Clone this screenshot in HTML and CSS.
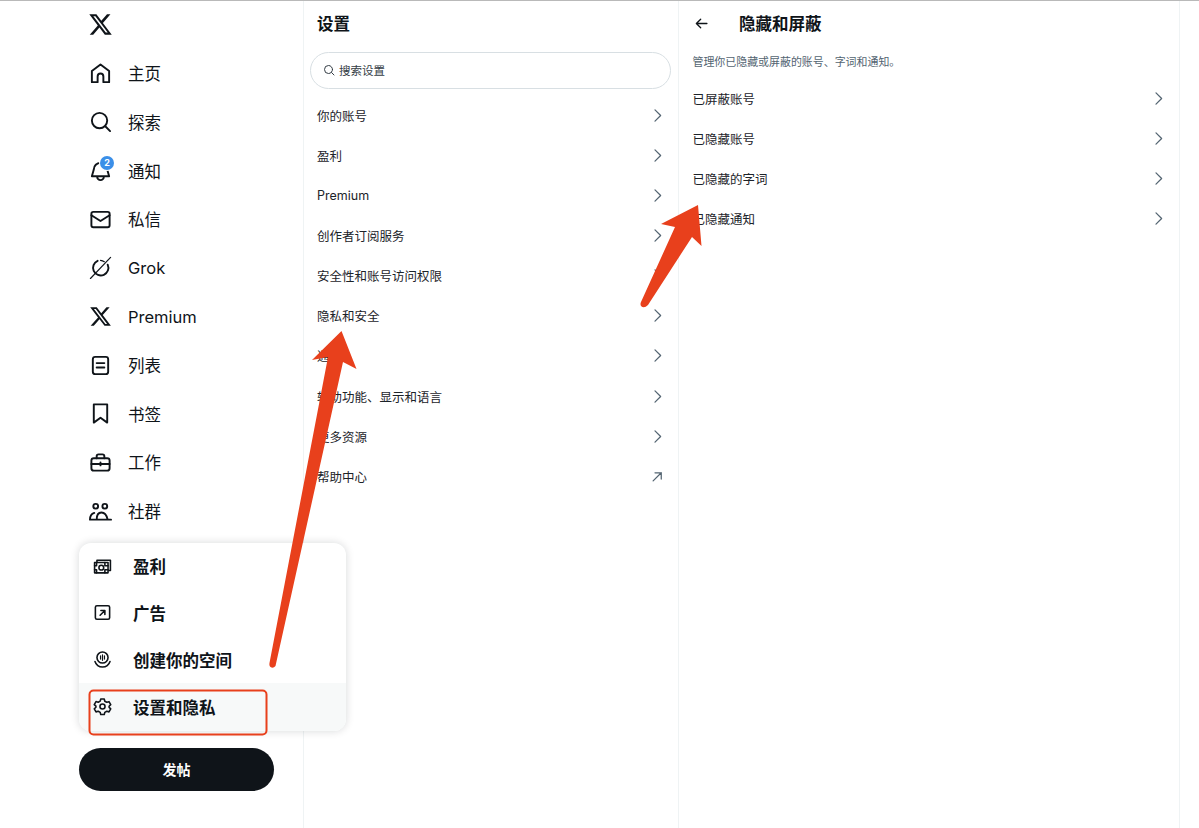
FILE: index.html
```html
<!DOCTYPE html>
<html lang="zh-CN">
  <head>
    <meta charset="UTF-8" />
    <meta name="viewport" content="width=device-width, initial-scale=1.0" />
    <title>隐藏和屏蔽</title>
    <link rel="stylesheet" href="styles.css">
  </head>
  <body>
    <div class="app">
      <aside class="sidebar">
        <div class="logo">
          <svg viewBox="0 0 24 24" class="icon-logo"><path class="fill" d="M18.244 2.25h3.308l-7.227 8.26 8.502 11.24H16.17l-5.214-6.817L4.99 21.75H1.68l7.73-8.835L1.254 2.25H8.08l4.713 6.231zm-1.161 17.52h1.833L7.084 4.126H5.117z"/></svg>
        </div>
        <nav class="nav">
          <a class="nav-item">
            <svg viewBox="0 0 24 24" class="icon"><path d="M12 2.6 21 9.4V21h-6v-6a3 3 0 0 0-6 0v6H3V9.4z"/></svg>
            <span>主页</span>
          </a>
          <a class="nav-item">
            <svg viewBox="0 0 24 24" class="icon"><circle cx="11" cy="11" r="8"/><path d="m17 17 5 5"/></svg>
            <span>探索</span>
          </a>
          <a class="nav-item">
            <span class="icon-wrap">
              <svg viewBox="0 0 24 24" class="icon"><path d="M5 11a7 7 0 0 1 7-7c4 0 7 3 7 7l2 7H3zM8.5 18.5a3.5 3.5 0 0 0 7 0"/></svg>
              <span class="badge">2</span>
            </span>
            <span>通知</span>
          </a>
          <a class="nav-item">
            <svg viewBox="0 0 24 24" class="icon"><rect x="2.5" y="4" width="19" height="16" rx="2"/><path d="m2.5 7.5 9.5 6 9.5-6"/></svg>
            <span>私信</span>
          </a>
          <a class="nav-item">
            <svg viewBox="0 0 24 24" class="icon"><path d="M19.5 9A8 8 0 1 1 9 5"/><path d="M1.5 23.5 22.5 1.5" class="thin"/><path d="M12 4.500a8 8 0 0 1 4 1.500" class="thin"/></svg>
            <span>Grok</span>
          </a>
          <a class="nav-item">
            <svg viewBox="0 0 24 24" class="icon"><path class="fill" d="M18.244 2.25h3.308l-7.227 8.26 8.502 11.24H16.17l-5.214-6.817L4.99 21.75H1.68l7.73-8.835L1.254 2.25H8.08l4.713 6.231zm-1.161 17.52h1.833L7.084 4.126H5.117z"/></svg>
            <span>Premium</span>
          </a>
          <a class="nav-item">
            <svg viewBox="0 0 24 24" class="icon"><rect x="4" y="3" width="16" height="18" rx="2.5"/><path d="M8 9.5h8M8 14h8"/></svg>
            <span>列表</span>
          </a>
          <a class="nav-item">
            <svg viewBox="0 0 24 24" class="icon"><path d="M5 2.5h14v19l-7-5-7 5z"/></svg>
            <span>书签</span>
          </a>
          <a class="nav-item">
            <svg viewBox="0 0 24 24" class="icon"><rect x="2.5" y="7.5" width="19" height="13" rx="2.5"/><path d="M8 7.5V5.5a2 2 0 0 1 2-2h4a2 2 0 0 1 2 2v2M2.5 13.5h19M12 12v3"/></svg>
            <span>工作</span>
          </a>
          <a class="nav-item">
            <svg viewBox="0 0 24 24" class="icon"><circle cx="7" cy="6.5" r="2.5"/><circle cx="16.5" cy="6.5" r="2.5"/><path d="M6.5 20.500H1c0-3.500 1.500-6 4.500-7M8 20.500c0-4.500 1.800-7.500 5-7.500 3.500 0 5.500 3 6.500 7.500M8 20.500h15"/></svg>
            <span>社群</span>
          </a>
        </nav>

        <div class="popup">
          <a class="popup-item popup-item-first">
            <svg viewBox="0 0 24 24" class="icon-sm"><path d="M5 6V4h17v13h-2"/><rect x="2" y="7" width="17" height="13"/><circle cx="10.5" cy="13.5" r="3"/><path d="M2 11h2.500V7M15 7v4h4M2 16h2.500v4M19 16h-4v4"/></svg>
            <span>盈利</span>
          </a>
          <a class="popup-item">
            <svg viewBox="0 0 24 24" class="icon-sm"><rect x="3" y="3.5" width="18" height="17" rx="2"/><path d="M9 15.5 15 9.5M10 9.5h5v5"/></svg>
            <span>广告</span>
          </a>
          <a class="popup-item">
            <svg viewBox="0 0 24 24" class="icon-sm"><circle cx="12" cy="9.500" r="7"/><path class="thin" d="M9.500 7.500v4M12 6v7M14.500 7.500v4"/><path d="M2.500 14.500c1.500 4.500 5 7 9.500 7s8-2.500 9.500-7"/></svg>
            <span>创建你的空间</span>
          </a>
          <a class="popup-item popup-item-active">
            <svg viewBox="0 0 24 24" class="icon-sm"><circle cx="12" cy="12" r="3.2"/><path d="M9.8 2.500h4.400l.7 2.800 2.500 1.400 2.800-.8 2.200 3.800-2.100 2 .1 1.400 2 1.900-2.200 3.800-2.800-.8-2.500 1.400-.7 2.800H9.800l-.7-2.800-2.500-1.400-2.800.8-2.200-3.800 2.100-2V11.600l-2.100-2 2.200-3.800 2.800.8 2.500-1.400z"/></svg>
            <span>设置和隐私</span>
          </a>
        </div>

        <button class="post-btn">发帖</button>
      </aside>

      <section class="settings">
        <h2 class="settings-title">设置</h2>
        <div class="search">
          <svg viewBox="0 0 24 24" class="icon-search"><circle cx="11" cy="11" r="8"/><path d="m17 17 5 5"/></svg>
          <span>搜索设置</span>
        </div>
        <ul class="rows">
          <li class="row">你的账号<svg viewBox="0 0 24 24" class="chevron"><path d="m8 3 9 9-9 9"/></svg></li>
          <li class="row">盈利<svg viewBox="0 0 24 24" class="chevron"><path d="m8 3 9 9-9 9"/></svg></li>
          <li class="row">Premium<svg viewBox="0 0 24 24" class="chevron"><path d="m8 3 9 9-9 9"/></svg></li>
          <li class="row">创作者订阅服务<svg viewBox="0 0 24 24" class="chevron"><path d="m8 3 9 9-9 9"/></svg></li>
          <li class="row">安全性和账号访问权限<svg viewBox="0 0 24 24" class="chevron"><path d="m8 3 9 9-9 9"/></svg></li>
          <li class="row">隐私和安全<svg viewBox="0 0 24 24" class="chevron"><path d="m8 3 9 9-9 9"/></svg></li>
          <li class="row">通知<svg viewBox="0 0 24 24" class="chevron"><path d="m8 3 9 9-9 9"/></svg></li>
          <li class="row">辅助功能、显示和语言<svg viewBox="0 0 24 24" class="chevron"><path d="m8 3 9 9-9 9"/></svg></li>
          <li class="row">更多资源<svg viewBox="0 0 24 24" class="chevron"><path d="m8 3 9 9-9 9"/></svg></li>
          <li class="row">帮助中心<svg viewBox="0 0 24 24" class="chevron"><path d="M5 19 18 6M8 6h10v10"/></svg></li>
        </ul>
      </section>

      <section class="detail">
        <div class="detail-head">
          <svg viewBox="0 0 24 24" class="back"><path d="M22 12H3M10.500 4 2.500 12l8 8"/></svg>
          <h2 class="detail-title">隐藏和屏蔽</h2>
        </div>
        <p class="detail-desc">管理你已隐藏或屏蔽的账号、字词和通知。</p>
        <ul class="rows">
          <li class="row">已屏蔽账号<svg viewBox="0 0 24 24" class="chevron"><path d="m8 3 9 9-9 9"/></svg></li>
          <li class="row">已隐藏账号<svg viewBox="0 0 24 24" class="chevron"><path d="m8 3 9 9-9 9"/></svg></li>
          <li class="row">已隐藏的字词<svg viewBox="0 0 24 24" class="chevron"><path d="m8 3 9 9-9 9"/></svg></li>
          <li class="row">已隐藏通知<svg viewBox="0 0 24 24" class="chevron"><path d="m8 3 9 9-9 9"/></svg></li>
        </ul>
      </section>
    </div>

    <!-- red annotations drawn over the screenshot -->
    <svg class="marks" viewBox="0 0 1199 828">
      <rect x="89.500" y="690.500" width="177" height="44" rx="4" class="mark-box"/>
      <path class="mark-arrow" d="M341.500 331 356.500 369 343 362 275.500 666Q273 669 270.500 667Q269 666 269.500 663L328 357 312 360z"/>
      <path class="mark-arrow" d="M698 205 701.500 246 692 237 648 305Q644 309 641 306Q640 304 641 302L675 227 661 224z"/>
    </svg>
  </body>
</html>
```

FILE: styles.css
```css
* {
  margin: 0;
  padding: 0;
  box-sizing: border-box;
}

:root {
  --text: #0f1419;
  --muted: #536471;
  --line: #eff3f4;
  --red: #e8401c;
}

body {
  position: relative;
  width: 1199px;
  height: 828px;
  overflow: hidden;
  background: #fff;
  color: var(--text);
  font-family: Inter, "Noto Sans CJK SC", sans-serif;
  border-top: 1px solid #b9b9b9;
}

ul {
  list-style: none;
}

svg {
  fill: none;
  stroke: currentColor;
  stroke-linejoin: round;
  stroke-linecap: round;
  flex: none;
}

svg .fill {
  fill: currentColor;
  stroke: none;
}

.app {
  display: flex;
  height: 827px;
}

/* left column */
.sidebar {
  flex: 0 0 303px;
  min-width: 0;
  padding-left: 79px;
}

.logo {
  height: 48px;
  padding: 11px 0 0 9px;
}

.icon-logo {
  width: 25px;
  height: 25px;
}

.nav-item {
  display: flex;
  align-items: center;
  gap: 16px;
  height: 48.650px;
  padding-left: 10px;
  font-size: 16.500px;
}

.icon {
  width: 23px;
  height: 23px;
  stroke-width: 2;
  display: block;
}

.icon .thin {
  stroke-width: 1.200;
}

.icon-wrap {
  position: relative;
  display: block;
}

.badge {
  position: absolute;
  top: -3px;
  left: 11px;
  width: 14px;
  height: 14px;
  border-radius: 50%;
  background: #3b8fe8;
  box-shadow: 0 0 0 1px #fff;
  color: #fff;
  font-size: 9px;
  font-weight: 700;
  line-height: 14px;
  text-align: center;
}

.popup {
  position: relative;
  z-index: 2;
  width: 267px;
  height: 188px;
  margin-top: 8px;
  background: #fff;
  border-radius: 12px;
  overflow: hidden;
  box-shadow: 0 0 8px rgba(15, 20, 25, 0.16);
}

.popup-item {
  display: flex;
  align-items: center;
  gap: 21px;
  height: 47px;
  padding-left: 14px;
  font-size: 16.500px;
  font-weight: 700;
}

.popup-item-first {
  height: 46px;
  padding-bottom: 0;
  padding-top: 0;
  margin-top: 0;
}

.popup-item-active {
  height: 48px;
  background: #f7f9f9;
  padding-bottom: 1px;
}

.icon-sm {
  width: 19px;
  height: 19px;
  stroke-width: 2;
}

.icon-sm .thin {
  stroke-width: 1.500;
}

.post-btn {
  display: block;
  width: 195px;
  height: 43px;
  margin-top: 17px;
  padding-bottom: 1px;
  border: 0;
  border-radius: 22px;
  background: var(--text);
  color: #fff;
  font-family: inherit;
  font-size: 14px;
  font-weight: 700;
}

/* middle column */
.settings {
  flex: 0 0 375px;
  border-left: 1px solid var(--line);
}

.settings-title {
  height: 51px;
  padding: 10px 0 0 13px;
  font-size: 16.500px;
  line-height: 26px;
  font-weight: 700;
}

.search {
  display: flex;
  align-items: center;
  gap: 4px;
  width: 361px;
  height: 37px;
  margin: 0 0 6.300px 6px;
  padding: 0 0 2px 12px;
  border: 1px solid #d8dfe3;
  border-radius: 19px;
  font-size: 11.500px;
  color: #333c44;
}

.icon-search {
  width: 12px;
  height: 12px;
  stroke-width: 2;
}

.row {
  display: flex;
  align-items: center;
  justify-content: space-between;
  height: 40.100px;
  font-size: 12.500px;
  color: #1c2329;
}

.settings .row {
  padding: 0 13px 0 13px;
}

.chevron {
  width: 15px;
  height: 15px;
  stroke-width: 2;
  color: var(--muted);
}

/* right column */
.detail {
  flex: 0 0 502px;
  border-left: 1px solid var(--line);
  border-right: 1px solid var(--line);
}

.detail-head {
  display: flex;
  align-items: center;
  gap: 31px;
  height: 44px;
  padding-left: 16px;
}

.back {
  width: 13px;
  height: 13px;
  stroke-width: 2.400;
}

.detail-title {
  font-size: 16.500px;
  font-weight: 700;
}

.detail-desc {
  height: 33.300px;
  padding: 9px 0 0 13.500px;
  font-size: 10.950px;
  line-height: 16px;
  color: var(--muted);
}

.detail .row {
  padding: 0 13px 0 13.500px;
}

/* annotations */
.marks {
  position: absolute;
  top: -1px;
  left: 0;
  z-index: 3;
  width: 1199px;
  height: 828px;
  pointer-events: none;
}

.mark-box {
  stroke: var(--red);
  stroke-width: 2;
}

.mark-arrow {
  fill: var(--red);
  stroke: none;
}
```
